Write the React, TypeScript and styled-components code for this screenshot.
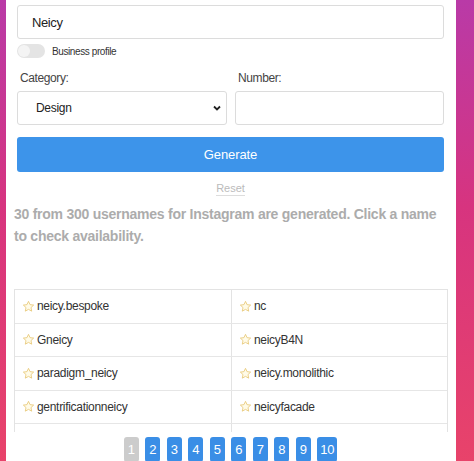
import React, { useState } from 'react'
import styled, { createGlobalStyle } from 'styled-components'

const FONT = `'Liberation Sans', Arial, sans-serif`

const GlobalStyle = createGlobalStyle`
  html, body {
    margin: 0;
    padding: 0;
    height: 100%;
    overflow: hidden;
  }
  body {
    background: linear-gradient(180deg, #b93aa7 0%, #d7347f 45%, #e8436a 100%);
    font-family: ${FONT};
  }
`

const NAMES: [string, string][] = [
  ['neicy.bespoke', 'nc'],
  ['Gneicy', 'neicyB4N'],
  ['paradigm_neicy', 'neicy.monolithic'],
  ['gentrificationneicy', 'neicyfacade'],
  ['neicyhub', 'theneicy'],
  ['neicy_official', 'neicyco'],
]

const PAGES = [1, 2, 3, 4, 5, 6, 7, 8, 9, 10]

const Star = () => (
  <svg width="13" height="13" viewBox="0 0 24 24">
    <path
      d="M12 2.5l2.9 6.1 6.6.8-4.9 4.6 1.3 6.6L12 17.3l-5.9 3.3 1.3-6.6-4.9-4.6 6.6-.8z"
      fill="#fffbe8"
      stroke="#e8c878"
      strokeWidth="1.6"
      strokeLinejoin="round"
    />
  </svg>
)

const App: React.FC = () => {
  const [business, setBusiness] = useState(false)

  return (
    <>
      <GlobalStyle />
      <Card>
        <Form>
          <TextInput defaultValue="Neicy" />
          <ToggleRow>
            <Toggle $on={business} onClick={() => setBusiness((b) => !b)}>
              <Knob $on={business} />
            </Toggle>
            <ToggleLabel>Business profile</ToggleLabel>
          </ToggleRow>
          <FieldGrid>
            <Field>
              <Label>Category:</Label>
              <SelectWrap>
                <Select defaultValue="Design">
                  <option>Design</option>
                  <option>Fashion</option>
                  <option>Travel</option>
                </Select>
                <Chevron width="10" height="10" viewBox="0 0 10 10">
                  <path d="M2 3.5l3 3 3-3" fill="none" stroke="#222" strokeWidth="1.8" />
                </Chevron>
              </SelectWrap>
            </Field>
            <Field>
              <Label>Number:</Label>
              <TextInput />
            </Field>
          </FieldGrid>
          <GenerateButton>Generate</GenerateButton>
          <ResetLink>Reset</ResetLink>
        </Form>
        <Results>
          <Summary>30 from 300 usernames for Instagram are generated. Click a name to check availability.</Summary>
          <NameTable>
            {NAMES.map((row, i) => (
              <NameRow key={`row_${i}`}>
                {row.map((name) => (
                  <NameCell key={name}>
                    <Star />
                    {name}
                  </NameCell>
                ))}
              </NameRow>
            ))}
          </NameTable>
          <Pager>
            {PAGES.map((p) => (
              <PageButton key={p} $active={p === 1}>
                {p}
              </PageButton>
            ))}
          </Pager>
        </Results>
      </Card>
    </>
  )
}

const Card = styled.div`
  margin-left: 6px;
  width: 450px;
  min-height: 461px;
  background: #fff;
  box-sizing: border-box;
`

const Form = styled.div`
  display: flex;
  flex-direction: column;
  padding: 5px 12px 0 11px;
`

const TextInput = styled.input`
  box-sizing: border-box;
  width: 100%;
  height: 34px;
  border: 1px solid #dcdcdc;
  border-radius: 3px;
  padding: 0 14px;
  font-family: ${FONT};
  font-size: 13px;
  letter-spacing: -0.4px;
  color: #222;
  outline: none;
`

const ToggleRow = styled.div`
  display: flex;
  align-items: center;
  gap: 7px;
  height: 14px;
  margin-top: 5px;
`

const Toggle = styled.div<{ $on: boolean }>`
  position: relative;
  width: 28px;
  height: 14px;
  border-radius: 7px;
  background: ${(p) => (p.$on ? '#3d94ea' : '#e4e4e4')};
  cursor: pointer;
`

const Knob = styled.div<{ $on: boolean }>`
  position: absolute;
  top: 1px;
  left: ${(p) => (p.$on ? '15px' : '1px')};
  width: 12px;
  height: 12px;
  border-radius: 50%;
  background: #f4f4f4;
`

const ToggleLabel = styled.span`
  font-size: 10px;
  letter-spacing: -0.4px;
  color: #333;
`

const FieldGrid = styled.div`
  display: grid;
  grid-template-columns: 210px 209px;
  column-gap: 8px;
  margin-top: 12px;
`

const Field = styled.div`
  display: flex;
  flex-direction: column;
`

const Label = styled.label`
  font-size: 12px;
  letter-spacing: -0.4px;
  color: #444;
  line-height: 16px;
  padding-left: 3px;
  margin-bottom: 5px;
`

const SelectWrap = styled.div`
  position: relative;
`

const Select = styled.select`
  appearance: none;
  box-sizing: border-box;
  width: 100%;
  height: 34px;
  border: 1px solid #dcdcdc;
  border-radius: 3px;
  background: #fff;
  padding: 0 18px;
  font-family: ${FONT};
  font-size: 12px;
  letter-spacing: -0.3px;
  color: #222;
  outline: none;
`

const Chevron = styled.svg`
  position: absolute;
  right: 5px;
  top: 12px;
  pointer-events: none;
`

const GenerateButton = styled.button`
  height: 35px;
  margin-top: 12px;
  border: none;
  border-radius: 3px;
  background: #3d94ea;
  color: #fff;
  font-family: ${FONT};
  font-size: 13px;
  letter-spacing: -0.1px;
  cursor: pointer;
`

const ResetLink = styled.span`
  align-self: center;
  margin-top: 10px;
  font-size: 11px;
  line-height: 13px;
  color: #bbb;
  border-bottom: 1px solid #ddd;
  cursor: pointer;
`

const Results = styled.div`
  padding: 0 8px;
`

const Summary = styled.p`
  margin: 7px 0 0;
  font-size: 14px;
  letter-spacing: -0.25px;
  font-weight: bold;
  line-height: 22px;
  color: #acacac;
`

const NameTable = styled.div`
  margin-top: 42px;
  height: 142px;
  overflow: hidden;
  border: 1px solid #e3e3e3;
  border-bottom: none;
`

const NameRow = styled.div`
  display: grid;
  grid-template-columns: 216px 1fr;
  height: 33.5px;
  border-bottom: 1px solid #e6e6e6;
  box-sizing: border-box;
`

const NameCell = styled.div`
  display: flex;
  align-items: center;
  gap: 2px;
  padding-left: 7px;
  font-size: 12px;
  letter-spacing: -0.3px;
  color: #333;
  & + & {
    border-left: 1px solid #e3e3e3;
  }
`

const Pager = styled.div`
  display: flex;
  justify-content: center;
  gap: 6.5px;
  margin-top: 5px;
  padding-right: 1px;
`

const PageButton = styled.span<{ $active: boolean }>`
  display: flex;
  align-items: center;
  justify-content: center;
  min-width: 15px;
  height: 25px;
  padding: 0 3px;
  box-sizing: border-box;
  border-radius: 3px;
  background: ${(p) => (p.$active ? '#cccccc' : '#3a8ee6')};
  color: #fff;
  font-size: 13px;
  letter-spacing: -0.3px;
  cursor: pointer;
`

export default App
